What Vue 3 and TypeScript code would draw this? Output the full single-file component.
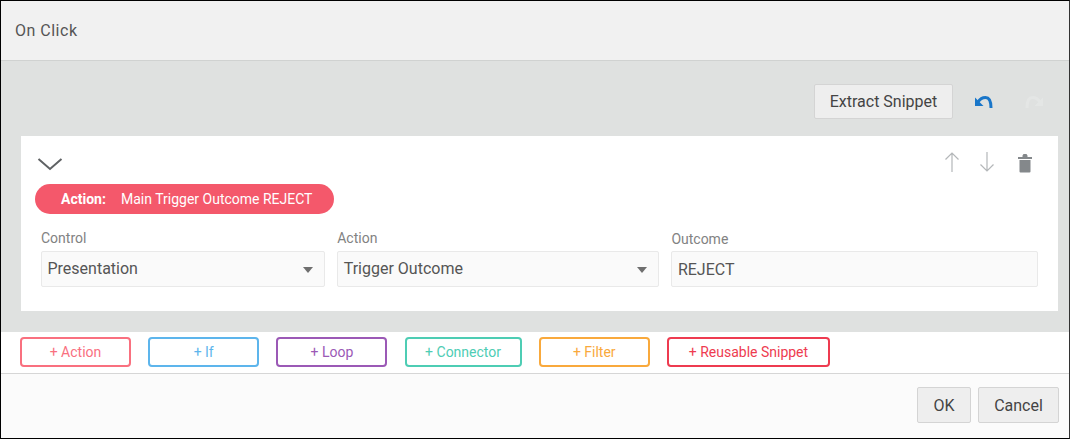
<script setup lang="ts">
interface AddButton {
  label: string
  color: string
  width: number
}

const addButtons: AddButton[] = [
  { label: '+ Action', color: '#f9707f', width: 111 },
  { label: '+ If', color: '#5db5ec', width: 111 },
  { label: '+ Loop', color: '#9b59b6', width: 111 },
  { label: '+ Connector', color: '#4ecdb4', width: 117 },
  { label: '+ Filter', color: '#f9a93c', width: 111 },
  { label: '+ Reusable Snippet', color: '#ee3b50', width: 163 }
]
</script>

<template>
  <div class="dialog">
    <header class="dialog__header">On Click</header>

    <main class="dialog__body">
      <div class="tools">
        <button class="btn btn--extract">Extract Snippet</button>
        <svg class="tools__icon" viewBox="0 0 20 20" width="20" height="20">
          <path fill="#1976c9" d="M1 4.500V13h8.500z" />
          <path d="M4 9C6 5.800 8.800 4.500 11.500 4.500 14.800 4.500 17 7.500 17 15" fill="none" stroke="#1976c9" stroke-width="3" />
        </svg>
        <svg class="tools__icon tools__icon--off" viewBox="0 0 20 20" width="20" height="20">
          <path fill="#e4e6e5" d="M19 4.500V13h-8.500z" />
          <path d="M16 9C14 5.800 11.200 4.500 8.500 4.500 5.200 4.500 3 7.500 3 15" fill="none" stroke="#e4e6e5" stroke-width="3" />
        </svg>
      </div>

      <section class="card">
        <div class="card__top">
          <svg class="card__chevron" viewBox="0 0 26 14" width="26" height="14">
            <path d="M1.500 2 13 12 24.500 2" fill="none" stroke="#5f6264" stroke-width="2" />
          </svg>
          <div class="card__icons">
            <svg viewBox="0 0 16 22" width="16" height="22">
              <path d="M8 21V2M1.500 8.500 8 2l6.500 6.500" fill="none" stroke="#b4b7b9" stroke-width="1.200" />
            </svg>
            <svg viewBox="0 0 16 22" width="16" height="22">
              <path d="M8 1v19M1.500 13.500 8 20l6.500-6.500" fill="none" stroke="#b4b7b9" stroke-width="1.200" />
            </svg>
            <svg class="card__trash" viewBox="0 0 16 20" width="16" height="20">
              <path fill="#84888b" d="M1 4h14v2H1zM5.500 2.500 6.500 1h3l1 1.500V4h-5zM2.500 7h11v11.500a1 1 0 0 1-1 1h-9a1 1 0 0 1-1-1z" />
            </svg>
          </div>
        </div>

        <div class="pill">
          <b class="pill__type">Action:</b>
          <span>Main Trigger Outcome REJECT</span>
        </div>

        <div class="fields">
          <div class="field field--control">
            <label>Control</label>
            <div class="input input--select">
              Presentation
              <i class="input__caret" />
            </div>
          </div>
          <div class="field field--action">
            <label>Action</label>
            <div class="input input--select">
              Trigger Outcome
              <i class="input__caret" />
            </div>
          </div>
          <div class="field field--outcome">
            <label>Outcome</label>
            <div class="input input--text">REJECT</div>
          </div>
        </div>
      </section>
    </main>

    <div class="adders">
      <button
        v-for="item in addButtons"
        :key="item.label"
        class="adders__btn"
        :style="{ color: item.color, borderColor: item.color, width: item.width + 'px' }"
      >
        {{ item.label }}
      </button>
    </div>

    <footer class="dialog__footer">
      <button class="btn btn--ok">OK</button>
      <button class="btn btn--cancel">Cancel</button>
    </footer>
  </div>
</template>

<style>
html,
body {
  margin: 0;
  background: #fff;
}
</style>

<style scoped>
.dialog {
  box-sizing: border-box;
  width: 1070px;
  height: 439px;
  display: flex;
  flex-direction: column;
  border: 1px solid #000;
  border-right-color: #333;
  background: #fbfbfb;
  font-family: Roboto, "Liberation Sans", Arial, sans-serif;
  overflow: hidden;
}

.dialog__header {
  box-sizing: border-box;
  height: 60px;
  padding: 0 14px;
  display: flex;
  align-items: center;
  background: #f1f1f1;
  border-bottom: 1px solid #d0d2d1;
  color: #555;
  font-size: 16px;
  letter-spacing: 0.5px;
}

.dialog__body {
  box-sizing: border-box;
  height: 271px;
  padding: 20px 11px 21px 20px;
  background: #dfe1e0;
}

.tools {
  height: 55px;
  display: flex;
  align-items: flex-start;
  justify-content: flex-end;
  padding-right: 14px;
}

.btn {
  box-sizing: border-box;
  height: 36px;
  border: 1px solid #d4d4d4;
  border-radius: 2px;
  background: #eee;
  color: #444;
  font-family: inherit;
  font-size: 16px;
  padding: 0;
}

.btn--extract {
  width: 139px;
  height: 35px;
  margin: 3px 21px 0 0;
}

.tools__icon {
  margin-top: 12px;
}

.tools__icon--off {
  margin-left: 30px;
}

.card {
  box-sizing: border-box;
  height: 175px;
  padding: 18px 20px 0 14px;
  background: #fff;
}

.card__top {
  height: 30px;
  display: flex;
  justify-content: space-between;
  align-items: flex-start;
}

.card__chevron {
  margin: 3px 0 0 2px;
}

.card__icons {
  display: flex;
  align-items: flex-start;
  gap: 19px;
  padding-right: 5px;
  margin-top: -3px;
}

.card__trash {
  margin: 2px 0 0 3px;
}

.pill {
  box-sizing: border-box;
  width: 299px;
  height: 30px;
  padding-bottom: 1px;
  display: flex;
  align-items: center;
  border-radius: 15px;
  background: #f4586b;
  color: #fff;
  font-size: 14px;
  white-space: nowrap;
}

.pill__type {
  width: 86px;
  padding-left: 26px;
  box-sizing: border-box;
}

.fields {
  display: flex;
  gap: 12px;
  margin-top: 16px;
  padding-left: 6px;
}

.field label {
  display: block;
  height: 21px;
  color: #828282;
  font-size: 14px;
  line-height: 16px;
}

.field--control {
  width: 284.500px;
}

.field--action {
  width: 322.500px;
}

.field--outcome {
  width: 367px;
}

.field--outcome label {
  padding-top: 1px;
  height: 20px;
}

.input {
  box-sizing: border-box;
  position: relative;
  height: 36px;
  padding-left: 5.500px;
  display: flex;
  align-items: center;
  border: 1px solid #e9e9e9;
  border-radius: 2px;
  background: #fafafa;
  color: #555;
  font-size: 16px;
}

.input--select {
  padding-bottom: 1px;
}

.input--text {
  padding-top: 1px;
}

.input__caret {
  position: absolute;
  right: 11px;
  top: 15px;
  border-style: solid;
  border-width: 6px 5px 0;
  border-color: #6f6f6f transparent transparent;
}

.adders {
  box-sizing: border-box;
  height: 42px;
  padding: 5px 19px 0;
  display: flex;
  gap: 17.200px;
  background: #fff;
  border-bottom: 1px solid #d6d6d6;
}

.adders__btn {
  box-sizing: border-box;
  height: 30px;
  padding: 0;
  border: 2px solid;
  border-radius: 4px;
  background: #fff;
  font-family: inherit;
  font-size: 14px;
}

.dialog__footer {
  flex: 1;
  display: flex;
  justify-content: flex-end;
  gap: 7px;
  padding: 13px 10px 0 0;
  background: #fbfbfb;
}

.btn--ok {
  width: 54px;
}

.btn--cancel {
  width: 81px;
}
</style>
